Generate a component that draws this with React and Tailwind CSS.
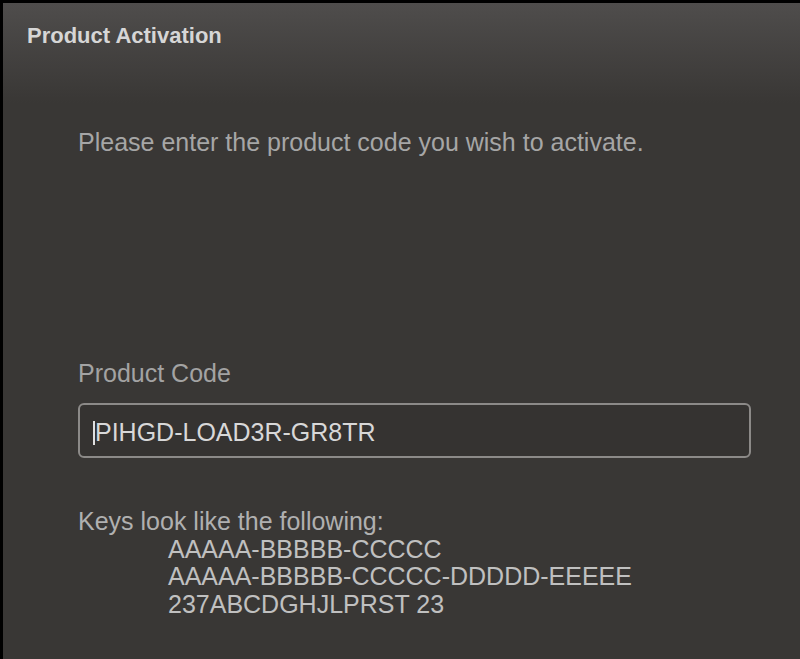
export default function App() {
  return (
    <div
      className="w-[800px] h-[659px] overflow-hidden bg-[#393735] border-t-[3px] border-l-[3px] border-black"
      style={{ fontFamily: '"Liberation Sans", Arial, sans-serif' }}
    >
      <div className="h-[100px] bg-gradient-to-b from-[#4f4d4c] to-[#393735] pl-[24px] pt-[20px]">
        <h1 className="text-[22px] font-bold text-[#d6d6d6] leading-[26px]">Product Activation</h1>
      </div>
      <div className="pl-[75px] pr-[49px]">
        <p className="mt-[25px] text-[25px] leading-[28px] text-[#a6a6a6]">
          Please enter the product code you wish to activate.
        </p>
        <label className="block mt-[203px] text-[25px] leading-[28px] text-[#a3a3a3]">Product Code</label>
        <div className="mt-[16px] h-[55px] rounded-[6px] border-2 border-[#8c8a88] bg-[#353331] flex items-center pl-[13px] pt-[4px]">
          <span className="w-[2px] h-[24px] bg-[#e0e0e0]" />
          <span className="text-[25px] text-[#d8d8d8] leading-none">PIHGD-LOAD3R-GR8TR</span>
        </div>
        <div className="mt-[50px] text-[25px] leading-[27.5px] text-[#b0b0b0]">
          <div>Keys look like the following:</div>
          <div className="pl-[90px] text-[#c0c0c0]">
            <div>AAAAA-BBBBB-CCCCC</div>
            <div>AAAAA-BBBBB-CCCCC-DDDDD-EEEEE</div>
            <div>237ABCDGHJLPRST 23</div>
          </div>
        </div>
      </div>
    </div>
  );
}
